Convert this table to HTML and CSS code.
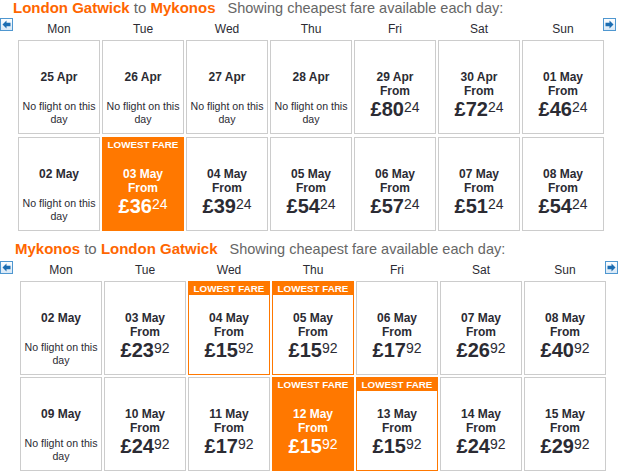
FILE: index.html
```html
<!DOCTYPE html>
<html>
<head>
<meta charset="utf-8">
<link rel="stylesheet" href="styles.css">
</head>
<body>
<section class="section">
  <div class="title"><span class="place">London Gatwick</span> to <span class="place">Mykonos</span><span class="note">Showing cheapest fare available each day:</span></div>
  <div class="days">
    <svg class="arrow" viewBox="0 0 13 13"><defs><linearGradient id="g1" x1="0" y1="0" x2="0" y2="1"><stop offset="0" stop-color="#ffffff"/><stop offset="1" stop-color="#d6e7f6"/></linearGradient></defs><rect x="0.5" y="0.5" width="12" height="12" fill="url(#g1)" stroke="#4f97d0"/><path d="M2.5 6.5 L6.5 2.5 L6.5 4.8 L10.5 4.8 L10.5 8.2 L6.5 8.2 L6.5 10.5 Z" fill="#1b6db2"/></svg>
    <div class="dayname">Mon</div><div class="dayname">Tue</div><div class="dayname">Wed</div><div class="dayname">Thu</div><div class="dayname">Fri</div><div class="dayname">Sat</div><div class="dayname">Sun</div>
    <svg class="arrow arrow--next" viewBox="0 0 13 13"><rect x="0.5" y="0.5" width="12" height="12" fill="url(#g1)" stroke="#4f97d0"/><path d="M10.5 6.5 L6.5 2.5 L6.5 4.8 L2.5 4.8 L2.5 8.2 L6.5 8.2 L6.5 10.5 Z" fill="#1b6db2"/></svg>
  </div>
  <div class="grid">
    <div class="cell"><div class="date">25 Apr</div><div class="none">No flight on this day</div></div>
    <div class="cell"><div class="date">26 Apr</div><div class="none">No flight on this day</div></div>
    <div class="cell"><div class="date">27 Apr</div><div class="none">No flight on this day</div></div>
    <div class="cell"><div class="date">28 Apr</div><div class="none">No flight on this day</div></div>
    <div class="cell"><div class="date">29 Apr</div><div class="from">From</div><div class="price">£80<sup>24</sup></div></div>
    <div class="cell"><div class="date">30 Apr</div><div class="from">From</div><div class="price">£72<sup>24</sup></div></div>
    <div class="cell"><div class="date">01 May</div><div class="from">From</div><div class="price">£46<sup>24</sup></div></div>

    <div class="cell"><div class="date">02 May</div><div class="none">No flight on this day</div></div>
    <div class="cell cell--best cell--fill"><div class="badge">LOWEST FARE</div><div class="date">03 May</div><div class="from">From</div><div class="price">£36<sup>24</sup></div></div>
    <div class="cell"><div class="date">04 May</div><div class="from">From</div><div class="price">£39<sup>24</sup></div></div>
    <div class="cell"><div class="date">05 May</div><div class="from">From</div><div class="price">£54<sup>24</sup></div></div>
    <div class="cell"><div class="date">06 May</div><div class="from">From</div><div class="price">£57<sup>24</sup></div></div>
    <div class="cell"><div class="date">07 May</div><div class="from">From</div><div class="price">£51<sup>24</sup></div></div>
    <div class="cell"><div class="date">08 May</div><div class="from">From</div><div class="price">£54<sup>24</sup></div></div>
  </div>
</section>

<section class="section section--return">
  <div class="title"><span class="place">Mykonos</span> to <span class="place">London Gatwick</span><span class="note">Showing cheapest fare available each day:</span></div>
  <div class="days">
    <svg class="arrow" viewBox="0 0 13 13"><rect x="0.5" y="0.5" width="12" height="12" fill="url(#g1)" stroke="#4f97d0"/><path d="M2.5 6.5 L6.5 2.5 L6.5 4.8 L10.5 4.8 L10.5 8.2 L6.5 8.2 L6.5 10.5 Z" fill="#1b6db2"/></svg>
    <div class="dayname">Mon</div><div class="dayname">Tue</div><div class="dayname">Wed</div><div class="dayname">Thu</div><div class="dayname">Fri</div><div class="dayname">Sat</div><div class="dayname">Sun</div>
    <svg class="arrow arrow--next" viewBox="0 0 13 13"><rect x="0.5" y="0.5" width="12" height="12" fill="url(#g1)" stroke="#4f97d0"/><path d="M10.5 6.5 L6.5 2.5 L6.5 4.8 L2.5 4.8 L2.5 8.2 L6.5 8.2 L6.5 10.5 Z" fill="#1b6db2"/></svg>
  </div>
  <div class="grid">
    <div class="cell"><div class="date">02 May</div><div class="none">No flight on this day</div></div>
    <div class="cell"><div class="date">03 May</div><div class="from">From</div><div class="price">£23<sup>92</sup></div></div>
    <div class="cell cell--best"><div class="badge">LOWEST FARE</div><div class="date">04 May</div><div class="from">From</div><div class="price">£15<sup>92</sup></div></div>
    <div class="cell cell--best"><div class="badge">LOWEST FARE</div><div class="date">05 May</div><div class="from">From</div><div class="price">£15<sup>92</sup></div></div>
    <div class="cell"><div class="date">06 May</div><div class="from">From</div><div class="price">£17<sup>92</sup></div></div>
    <div class="cell"><div class="date">07 May</div><div class="from">From</div><div class="price">£26<sup>92</sup></div></div>
    <div class="cell"><div class="date">08 May</div><div class="from">From</div><div class="price">£40<sup>92</sup></div></div>

    <div class="cell"><div class="date">09 May</div><div class="none">No flight on this day</div></div>
    <div class="cell"><div class="date">10 May</div><div class="from">From</div><div class="price">£24<sup>92</sup></div></div>
    <div class="cell"><div class="date">11 May</div><div class="from">From</div><div class="price">£17<sup>92</sup></div></div>
    <div class="cell cell--best cell--fill"><div class="badge">LOWEST FARE</div><div class="date">12 May</div><div class="from">From</div><div class="price">£15<sup>92</sup></div></div>
    <div class="cell cell--best"><div class="badge">LOWEST FARE</div><div class="date">13 May</div><div class="from">From</div><div class="price">£15<sup>92</sup></div></div>
    <div class="cell"><div class="date">14 May</div><div class="from">From</div><div class="price">£24<sup>92</sup></div></div>
    <div class="cell"><div class="date">15 May</div><div class="from">From</div><div class="price">£29<sup>92</sup></div></div>
  </div>
</section>
</body>
</html>
```
FILE: styles.css
```css
body {
  margin: 0;
  width: 621px;
  background: #fff;
  color: #2b2b33;
  font-family: "Liberation Sans", Arial, sans-serif;
}

.title {
  height: 18px;
  line-height: 16px;
  font-size: 15px;
  padding-left: 13px;
  color: #666;
  white-space: nowrap;
}

.title .place {
  color: #ff6600;
  font-weight: bold;
}

.title .note {
  margin-left: 12px;
  font-size: 14.5px;
}

.days {
  display: grid;
  grid-template-columns: 16px repeat(7, 82px) 13px;
  column-gap: 2px;
  height: 22px;
}

.dayname {
  text-align: center;
  font-size: 12px;
  line-height: 22px;
}

.arrow {
  display: block;
  width: 13px;
  height: 13px;
}

.arrow--next {
  margin-left: -3px;
}

.grid {
  display: grid;
  grid-template-columns: repeat(7, 82px);
  grid-auto-rows: 94px;
  gap: 3px 2px;
  margin-left: 18px;
}

.section--return {
  margin-top: 10px;
}

.section--return .title {
  padding-left: 15px;
}

.section--return .days {
  grid-template-columns: 18px repeat(7, 82px) 13px;
}

.section--return .arrow {
  margin-top: 2px;
}

.section--return .grid {
  margin-left: 20px;
  row-gap: 2px;
}

.cell {
  position: relative;
  box-sizing: border-box;
  border: 1px solid #ccc;
  padding-top: 29px;
  text-align: center;
}

.date,
.from {
  font-size: 12px;
  font-weight: bold;
  line-height: 14px;
}

.none {
  margin-top: 16px;
  font-size: 10.6px;
  line-height: 13px;
}

.price {
  font-size: 20px;
  font-weight: bold;
  line-height: 22px;
}

.price sup {
  font-size: 14px;
  font-weight: normal;
  line-height: 1;
  vertical-align: 4px;
}

.cell--best {
  border-color: #ff7800;
}

.cell--fill {
  background: #ff7800;
  color: #fff;
}

.badge {
  position: absolute;
  top: 0;
  left: 0;
  right: 0;
  height: 13px;
  background: #ff7800;
  color: #fff;
  font-size: 9.8px;
  font-weight: bold;
  line-height: 13px;
}
```
